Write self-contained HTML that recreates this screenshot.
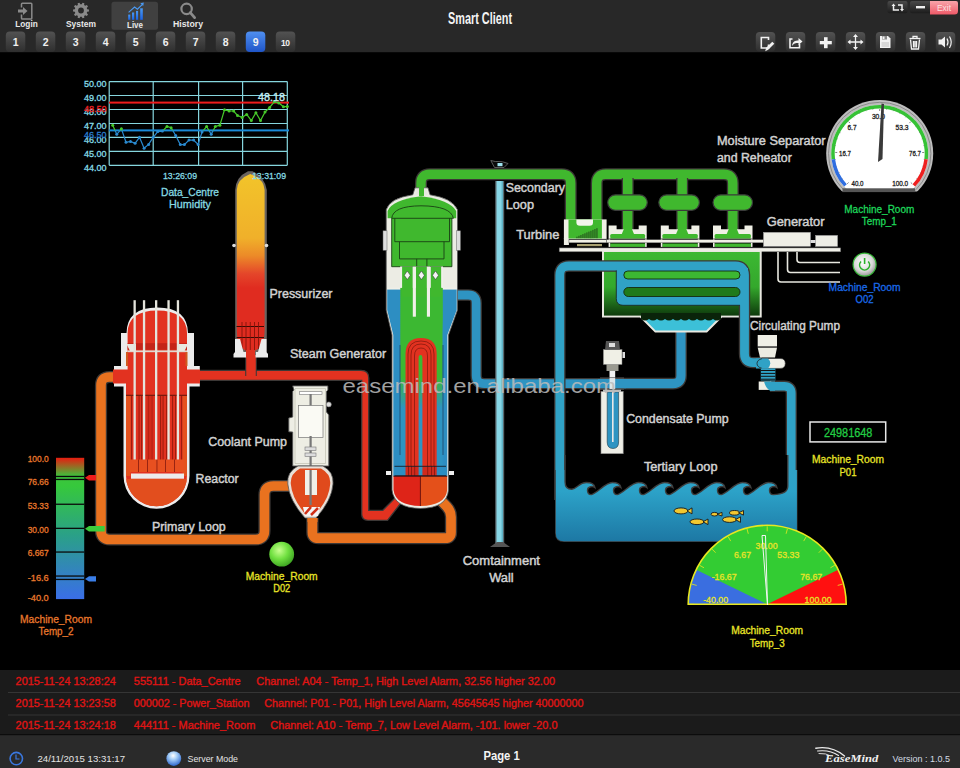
<!DOCTYPE html>
<html><head><meta charset="utf-8"><title>Smart Client</title>
<style>
html,body{margin:0;padding:0;background:#000;width:960px;height:768px;overflow:hidden}
svg{display:block;font-family:"Liberation Sans",sans-serif}
</style></head><body>
<svg width="960" height="768" viewBox="0 0 960 768">
<defs>
<linearGradient id="btn" x1="0" y1="0" x2="0" y2="1"><stop offset="0" stop-color="#525252"/><stop offset="1" stop-color="#2e2e2e"/></linearGradient>
<linearGradient id="btnb" x1="0" y1="0" x2="0" y2="1"><stop offset="0" stop-color="#4f8ff0"/><stop offset="1" stop-color="#1f55c8"/></linearGradient>
<linearGradient id="exitg" x1="0" y1="0" x2="0" y2="1"><stop offset="0" stop-color="#f8a4aa"/><stop offset="1" stop-color="#ee5a68"/></linearGradient>
<linearGradient id="wbtn" x1="0" y1="0" x2="0" y2="1"><stop offset="0" stop-color="#4a4a4a"/><stop offset="1" stop-color="#1c1c1c"/></linearGradient>
</defs>
<rect x="0" y="0" width="960" height="768" fill="#000"/>
<rect x="0" y="0" width="960" height="52.2" fill="#282828"/>
<rect x="0" y="670" width="960" height="65" fill="#1b1b1b"/>
<rect x="8" y="692" width="952" height="1" fill="#353535"/>
<rect x="8" y="714.5" width="952" height="1" fill="#353535"/>
<rect x="0" y="735" width="960" height="33" fill="#2a2a2a"/>
<rect x="0" y="734" width="960" height="1.2" fill="#0c0c0c"/>

<rect x="111.5" y="1.7" width="46.5" height="28" rx="2.5" fill="#404040"/>
<g fill="none" stroke="#8a8a8a" stroke-width="1.5"><path d="M21.5 7.5 V4 Q21.5 3.2 22.3 3.2 H31 Q31.8 3.2 31.8 4 V18.2 Q31.8 19 31 19 H22.3 Q21.5 19 21.5 18.2 V14.5"/></g>
<path d="M18 9.5 H23 V7 L27.5 11 L23 15 V12.5 H18 Z" fill="#8a8a8a"/>
<path d="M87.17 9.25 L88.94 9.54 L88.94 11.46 L87.17 11.75 L86.73 13.12 L87.99 14.39 L86.86 15.94 L85.26 15.14 L84.10 15.99 L84.37 17.76 L82.54 18.35 L81.72 16.76 L80.28 16.76 L79.46 18.35 L77.63 17.76 L77.90 15.99 L76.74 15.14 L75.14 15.94 L74.01 14.39 L75.27 13.12 L74.83 11.75 L73.06 11.46 L73.06 9.54 L74.83 9.25 L75.27 7.88 L74.01 6.61 L75.14 5.06 L76.74 5.86 L77.90 5.01 L77.63 3.24 L79.46 2.65 L80.28 4.24 L81.72 4.24 L82.54 2.65 L84.37 3.24 L84.10 5.01 L85.26 5.86 L86.86 5.06 L87.99 6.61 L86.73 7.88Z" fill="#8a8a8a"/><circle cx="81" cy="10.5" r="2.9" fill="#282828"/>
<linearGradient id="liveg" x1="0" y1="0" x2="0" y2="1"><stop offset="0" stop-color="#4a9af4"/><stop offset="1" stop-color="#1a62e4"/></linearGradient>
<g fill="url(#liveg)"><rect x="128.2" y="14.6" width="2.1" height="5.2"/><rect x="132" y="12.5" width="2.2" height="7.3"/><rect x="136" y="10.9" width="2.1" height="8.9"/><rect x="140.2" y="8.3" width="2.6" height="11.5"/></g>
<path d="M128.6 12.3 L134.6 7 L137.4 9.2 L142.2 4.6" fill="none" stroke="#4a9af4" stroke-width="1.1"/><path d="M140.3 3.2 L143.8 2.6 L143.2 6.1 Z" fill="#4a9af4"/>
<circle cx="186.6" cy="8.9" r="5.2" fill="none" stroke="#8a8a8a" stroke-width="2.2"/><path d="M190.3 12.6 L194.6 17.6" stroke="#8a8a8a" stroke-width="2.8" stroke-linecap="round"/>
<text x="26.5" y="27.3" font-size="9" fill="#e8e8e8" text-anchor="middle" font-weight="bold" textLength="22.5" lengthAdjust="spacingAndGlyphs">Login</text>
<text x="81" y="27.3" font-size="9" fill="#e8e8e8" text-anchor="middle" font-weight="bold" textLength="30" lengthAdjust="spacingAndGlyphs">System</text>
<text x="135" y="28" font-size="9" fill="#e8e8e8" text-anchor="middle" font-weight="bold" textLength="16" lengthAdjust="spacingAndGlyphs">Live</text>
<text x="188" y="27.3" font-size="9" fill="#e8e8e8" text-anchor="middle" font-weight="bold" textLength="30" lengthAdjust="spacingAndGlyphs">History</text>
<rect x="5.8" y="31.6" width="19.5" height="20.4" rx="4" fill="url(#btn)"/>
<text x="15.55" y="45.8" font-size="10.5" fill="#f0f0f0" text-anchor="middle" font-weight="bold" textLength="5">1</text>
<rect x="35.8" y="31.6" width="19.5" height="20.4" rx="4" fill="url(#btn)"/>
<text x="45.55" y="45.8" font-size="10.5" fill="#f0f0f0" text-anchor="middle" font-weight="bold" textLength="5">2</text>
<rect x="65.8" y="31.6" width="19.5" height="20.4" rx="4" fill="url(#btn)"/>
<text x="75.55" y="45.8" font-size="10.5" fill="#f0f0f0" text-anchor="middle" font-weight="bold" textLength="5">3</text>
<rect x="95.8" y="31.6" width="19.5" height="20.4" rx="4" fill="url(#btn)"/>
<text x="105.55" y="45.8" font-size="10.5" fill="#f0f0f0" text-anchor="middle" font-weight="bold" textLength="5">4</text>
<rect x="125.8" y="31.6" width="19.5" height="20.4" rx="4" fill="url(#btn)"/>
<text x="135.55" y="45.8" font-size="10.5" fill="#f0f0f0" text-anchor="middle" font-weight="bold" textLength="5">5</text>
<rect x="155.8" y="31.6" width="19.5" height="20.4" rx="4" fill="url(#btn)"/>
<text x="165.55" y="45.8" font-size="10.5" fill="#f0f0f0" text-anchor="middle" font-weight="bold" textLength="5">6</text>
<rect x="185.8" y="31.6" width="19.5" height="20.4" rx="4" fill="url(#btn)"/>
<text x="195.55" y="45.8" font-size="10.5" fill="#f0f0f0" text-anchor="middle" font-weight="bold" textLength="5">7</text>
<rect x="215.8" y="31.6" width="19.5" height="20.4" rx="4" fill="url(#btn)"/>
<text x="225.55" y="45.8" font-size="10.5" fill="#f0f0f0" text-anchor="middle" font-weight="bold" textLength="5">8</text>
<rect x="245.8" y="31.6" width="19.5" height="20.4" rx="4" fill="url(#btnb)"/>
<text x="255.55" y="45.8" font-size="10.5" fill="#f0f0f0" text-anchor="middle" font-weight="bold" textLength="5">9</text>
<rect x="275.8" y="31.6" width="19.5" height="20.4" rx="4" fill="url(#btn)"/>
<text x="285.55" y="46.3" font-size="8.5" fill="#f0f0f0" text-anchor="middle" font-weight="bold" textLength="9">10</text>
<text x="480" y="24.4" font-size="16.5" fill="#f4f4f4" text-anchor="middle" font-weight="bold" textLength="64" lengthAdjust="spacingAndGlyphs">Smart Client</text>
<rect x="887.5" y="0.9" width="20" height="12.4" rx="2" fill="url(#wbtn)"/>
<rect x="910" y="0.9" width="22" height="12.4" rx="2" fill="url(#wbtn)"/>
<path d="M930 0.9 H956 a2 2 0 0 1 2 2 V11 a3.5 3.5 0 0 1 -3.5 3.5 H930 Z" fill="url(#exitg)"/>
<text x="944" y="10.8" font-size="8.5" fill="#fbe0e0" text-anchor="middle" font-weight="normal" textLength="14" lengthAdjust="spacingAndGlyphs">Exit</text>
<rect x="916" y="6" width="9" height="2.4" fill="#f0f0f0"/>
<g fill="none" stroke="#f0f0f0" stroke-width="1.5"><path d="M893.5 5 V10 H899"/><path d="M898 5 H902 V10"/></g><path d="M891.5 6 L893.5 3.5 L895.5 6Z M900 9 L902 11.5 L904 9Z" fill="#f0f0f0"/>
<rect x="755.8" y="32" width="19.5" height="19.5" rx="4" fill="url(#btn)"/>
<rect x="785.8" y="32" width="19.5" height="19.5" rx="4" fill="url(#btn)"/>
<rect x="815.8" y="32" width="19.5" height="19.5" rx="4" fill="url(#btn)"/>
<rect x="845.8" y="32" width="19.5" height="19.5" rx="4" fill="url(#btn)"/>
<rect x="875.8" y="32" width="19.5" height="19.5" rx="4" fill="url(#btn)"/>
<rect x="905.8" y="32" width="19.5" height="19.5" rx="4" fill="url(#btn)"/>
<rect x="935.8" y="32" width="19.5" height="19.5" rx="4" fill="url(#btn)"/>
<path d="M768.5 44.5 V48 H761.3 V37.5 H768.5 V40" fill="none" stroke="#f2f2f2" stroke-width="1.6"/><path d="M765.2 51.2 L766.2 47.8 L772.3 41.7 L774.3 43.7 L768.2 49.8 Z" fill="#f2f2f2"/>
<path d="M799.5 44 V47.8 H790 V39 H792.5" fill="none" stroke="#f2f2f2" stroke-width="1.6"/><path d="M792 46 C792.5 41.5 795 40.5 798.5 40.5 V38 L802.5 41.5 L798.5 45 V43 C795.5 43 793.5 43.5 792 46Z" fill="#f2f2f2"/>
<rect x="819.8" y="41" width="12" height="3.3" fill="#f2f2f2"/><rect x="824" y="37.2" width="3.6" height="11" fill="#f2f2f2"/>
<g stroke="#f2f2f2" stroke-width="1.3"><path d="M855.5 35.5 V48.5 M849 42 H862"/></g><path d="M855.5 34 L853 37 H858Z M855.5 50 L853 47 H858Z M847.5 42 L850.5 39.5 V44.5Z M863.5 42 L860.5 39.5 V44.5Z" fill="#f2f2f2"/>
<path d="M880 36 H888 L890.5 38.5 V48 H880 Z" fill="#f2f2f2"/><rect x="882" y="36" width="5" height="3.5" fill="#8a8a8a"/><rect x="882.5" y="36.5" width="2" height="2.5" fill="#f2f2f2"/>
<rect x="881.5" y="42" width="7.5" height="5" fill="#d8d8d8"/>
<g fill="none" stroke="#f2f2f2" stroke-width="1.3"><path d="M909.5 38.5 H920.5"/><path d="M913 38 V36.5 H917 V38"/><path d="M910.5 39.5 L911.5 49 H918.5 L919.5 39.5"/><path d="M913.5 41 V47.5 M915 41 V47.5 M916.5 41 V47.5"/></g>
<path d="M938.5 39.5 H941.5 L945 36.5 V47.5 L941.5 44.5 H938.5 Z" fill="#f2f2f2"/><path d="M947 38.5 Q949 42 947 45.5 M949.5 36.5 Q953 42 949.5 48" fill="none" stroke="#f2f2f2" stroke-width="1.2"/>
<defs>
<linearGradient id="przg" x1="0" y1="0" x2="0" y2="1">
<stop offset="0" stop-color="#f2c42a"/><stop offset="0.36" stop-color="#f0b02a"/><stop offset="0.46" stop-color="#ec8a28"/><stop offset="0.56" stop-color="#e4462a"/><stop offset="0.64" stop-color="#e02c20"/><stop offset="1" stop-color="#e02c20"/></linearGradient>
<linearGradient id="condg" x1="0" y1="0" x2="0" y2="1">
<stop offset="0" stop-color="#3cb832"/><stop offset="0.55" stop-color="#34a82c"/><stop offset="1" stop-color="#0e3a0c"/></linearGradient>
<linearGradient id="basing" x1="0" y1="0" x2="0" y2="1">
<stop offset="0" stop-color="#30a2c6"/><stop offset="0.3" stop-color="#2ca2c8"/><stop offset="1" stop-color="#1d78a4"/></linearGradient>
<radialGradient id="ledg" cx="0.4" cy="0.35" r="0.7"><stop offset="0" stop-color="#c8ff90"/><stop offset="0.5" stop-color="#70e040"/><stop offset="1" stop-color="#3aa020"/></radialGradient>
</defs>
<path d="M118.00 377.00 L109.50 377.00 Q101.00 377.00 101.00 385.50 L101.00 530.50 Q101.00 539.50 110.00 539.50 L255.50 539.50 Q264.50 539.50 264.50 530.50 L264.50 495.00 Q264.50 486.00 273.50 486.00 L292.00 486.00" fill="none" stroke="#3c3836" stroke-width="12.2" stroke-linecap="butt"/>
<path d="M118.00 377.00 L109.50 377.00 Q101.00 377.00 101.00 385.50 L101.00 530.50 Q101.00 539.50 110.00 539.50 L255.50 539.50 Q264.50 539.50 264.50 530.50 L264.50 495.00 Q264.50 486.00 273.50 486.00 L292.00 486.00" fill="none" stroke="#e9721f" stroke-width="9.6" stroke-linecap="butt"/>
<path d="M312.40 518.00 L312.40 532.20 Q312.40 538.20 318.40 538.20 L445.00 538.20 Q451.00 538.20 451.00 532.20 L451.00 517.00 Q451.00 511.00 446.85 506.66 L440.00 499.50" fill="none" stroke="#3c3836" stroke-width="12.3" stroke-linecap="butt"/>
<path d="M312.40 518.00 L312.40 532.20 Q312.40 538.20 318.40 538.20 L445.00 538.20 Q451.00 538.20 451.00 532.20 L451.00 517.00 Q451.00 511.00 446.85 506.66 L440.00 499.50" fill="none" stroke="#e9721f" stroke-width="9.7" stroke-linecap="butt"/>
<path d="M196 370.3 H361 Q368.75 370.3 368.75 378 V510.3 H382.8 L396.5 496.5 L401 503 L387.5 520.3 H368 Q361.7 520.3 361.7 514 V380.3 H196 Z" fill="#e23220" stroke="#3c3836" stroke-width="1.3"/>
<path d="M251.00 355.00 L251.00 376.00" fill="none" stroke="#3c3836" stroke-width="11.6" stroke-linecap="butt"/>
<path d="M251.00 355.00 L251.00 376.00" fill="none" stroke="#e23220" stroke-width="9.0" stroke-linecap="butt"/>
<path d="M421.00 192.00 L421.00 183.15 Q421.00 174.30 429.85 174.30 L561.70 174.30 Q570.70 174.30 570.70 183.30 L570.70 222.00" fill="none" stroke="#3c3836" stroke-width="12.0" stroke-linecap="butt"/>
<path d="M421.00 192.00 L421.00 183.15 Q421.00 174.30 429.85 174.30 L561.70 174.30 Q570.70 174.30 570.70 183.30 L570.70 222.00" fill="none" stroke="#40b82e" stroke-width="9.4" stroke-linecap="butt"/>
<path d="M596.70 222.00 L596.70 183.30 Q596.70 174.30 605.70 174.30 L723.80 174.30 Q732.80 174.30 732.80 183.30 L732.80 198.00" fill="none" stroke="#3c3836" stroke-width="12.0" stroke-linecap="butt"/>
<path d="M596.70 222.00 L596.70 183.30 Q596.70 174.30 605.70 174.30 L723.80 174.30 Q732.80 174.30 732.80 183.30 L732.80 198.00" fill="none" stroke="#40b82e" stroke-width="9.4" stroke-linecap="butt"/>
<path d="M627.70 178.00 L627.70 198.00" fill="none" stroke="#3c3836" stroke-width="12.0" stroke-linecap="butt"/>
<path d="M627.70 178.00 L627.70 198.00" fill="none" stroke="#40b82e" stroke-width="9.4" stroke-linecap="butt"/>
<path d="M682.20 178.00 L682.20 198.00" fill="none" stroke="#3c3836" stroke-width="12.0" stroke-linecap="butt"/>
<path d="M682.20 178.00 L682.20 198.00" fill="none" stroke="#40b82e" stroke-width="9.4" stroke-linecap="butt"/>
<path d="M627.70 208.00 L627.70 230.00" fill="none" stroke="#3c3836" stroke-width="12.0" stroke-linecap="butt"/>
<path d="M627.70 208.00 L627.70 230.00" fill="none" stroke="#40b82e" stroke-width="9.4" stroke-linecap="butt"/>
<path d="M682.20 208.00 L682.20 230.00" fill="none" stroke="#3c3836" stroke-width="12.0" stroke-linecap="butt"/>
<path d="M682.20 208.00 L682.20 230.00" fill="none" stroke="#40b82e" stroke-width="9.4" stroke-linecap="butt"/>
<path d="M732.80 208.00 L732.80 230.00" fill="none" stroke="#3c3836" stroke-width="12.0" stroke-linecap="butt"/>
<path d="M732.80 208.00 L732.80 230.00" fill="none" stroke="#40b82e" stroke-width="9.4" stroke-linecap="butt"/>
<path d="M456.00 295.00 L468.20 295.00 Q476.20 295.00 476.20 303.00 L476.20 375.60 Q476.20 383.60 484.20 383.60 L606.00 383.60" fill="none" stroke="#3c3836" stroke-width="11.4" stroke-linecap="butt"/>
<path d="M456.00 295.00 L468.20 295.00 Q476.20 295.00 476.20 303.00 L476.20 375.60 Q476.20 383.60 484.20 383.60 L606.00 383.60" fill="none" stroke="#2e94c2" stroke-width="8.8" stroke-linecap="butt"/>
<path d="M681.00 328.00 L681.00 375.60 Q681.00 383.60 673.00 383.60 L618.00 383.60" fill="none" stroke="#3c3836" stroke-width="11.8" stroke-linecap="butt"/>
<path d="M681.00 328.00 L681.00 375.60 Q681.00 383.60 673.00 383.60 L618.00 383.60" fill="none" stroke="#2e94c2" stroke-width="9.2" stroke-linecap="butt"/>
<path d="M770.00 386.20 L784.30 386.20 Q791.30 386.20 791.30 393.20 L791.30 500.00" fill="none" stroke="#3c3836" stroke-width="11.2" stroke-linecap="butt"/>
<path d="M770.00 386.20 L784.30 386.20 Q791.30 386.20 791.30 393.20 L791.30 500.00" fill="none" stroke="#30a2c6" stroke-width="8.6" stroke-linecap="butt"/>
<rect x="246.5" y="355" width="9" height="22" fill="#e23220"/>
<path d="M121 366 V333 H126.5 Q127 307.4 157.3 307.4 Q187.5 307.4 188 333 H194 V366 H199.8 V386.5 H189.5 V475.8 A33 33 0 0 1 123.5 475.8 V386.5 H114 V366 Z" fill="#ececec"/>
<path d="M127.6 333 Q128 310.6 157.3 310.6 Q186.5 310.6 187 333 V369.5 H200 V383.5 H187 V475.8 A30.5 30.5 0 0 1 126 475.8 V383.5 H113 V369.5 H127.6 Z" fill="#e23220"/>
<rect x="127.6" y="343.2" width="59.4" height="6.5" fill="#c42418"/>
<rect x="127.6" y="350.4" width="59.4" height="1.8" fill="#e0d8d0"/>
<path d="M126.5 344 H136 V351 H130 Z M188 344 H178.5 V351 H184.5 Z" fill="#e8e8e0"/>
<rect x="121" y="352" width="6.6" height="14" fill="#ececec"/><rect x="187" y="352" width="7" height="14" fill="#ececec"/>
<rect x="126" y="352" width="2" height="14" fill="#d05a20"/><rect x="185.5" y="352" width="2" height="14" fill="#d05a20"/>
<rect x="126" y="396" width="4.5" height="80" fill="#e4521e"/><rect x="182.5" y="396" width="4.5" height="80" fill="#e4521e"/>
<rect x="131.0" y="396" width="1.1" height="64" fill="#a01c0e"/>
<rect x="138.5" y="396" width="1.1" height="64" fill="#a01c0e"/>
<rect x="141.0" y="396" width="1.1" height="64" fill="#a01c0e"/>
<rect x="148.0" y="396" width="1.1" height="64" fill="#a01c0e"/>
<rect x="151.5" y="396" width="1.1" height="64" fill="#a01c0e"/>
<rect x="160.0" y="396" width="1.1" height="64" fill="#a01c0e"/>
<rect x="162.5" y="396" width="1.1" height="64" fill="#a01c0e"/>
<rect x="166.0" y="396" width="1.1" height="64" fill="#a01c0e"/>
<rect x="172.0" y="396" width="1.1" height="64" fill="#a01c0e"/>
<rect x="175.0" y="396" width="1.1" height="64" fill="#a01c0e"/>
<rect x="181.0" y="396" width="1.1" height="64" fill="#a01c0e"/>
<rect x="146.5" y="396" width="7" height="64" fill="#c82616" opacity="0.6"/>
<rect x="126" y="394.8" width="61" height="0.9" fill="#501008"/>
<rect x="129" y="459.5" width="55" height="12.5" fill="#e85020"/>
<rect x="138.0" y="459.5" width="0.9" height="12.5" fill="#902010"/>
<rect x="147.0" y="459.5" width="0.9" height="12.5" fill="#902010"/>
<rect x="156.5" y="459.5" width="0.9" height="12.5" fill="#902010"/>
<rect x="165.0" y="459.5" width="0.9" height="12.5" fill="#902010"/>
<rect x="174.0" y="459.5" width="0.9" height="12.5" fill="#902010"/>
<rect x="131" y="473.5" width="53" height="5.2" fill="#ececec"/>
<path d="M126 479 V475.8 A30.5 30.5 0 0 0 187 475.8 V479 Z" fill="#e24e1e"/>
<rect x="133.5" y="300.2" width="2.3" height="159.3" fill="#e4e4dc"/>
<rect x="142.9" y="300.2" width="2.3" height="159.3" fill="#e4e4dc"/>
<rect x="155.0" y="300.2" width="2.3" height="159.3" fill="#e4e4dc"/>
<rect x="167.4" y="300.2" width="2.3" height="159.3" fill="#e4e4dc"/>
<rect x="176.8" y="300.2" width="2.3" height="159.3" fill="#e4e4dc"/>
<path d="M235.2 352 V190 Q235.6 177 248 171.2 H252.5 Q265 177 266.8 190 V352 Z" fill="#6a6460"/>
<path d="M236.8 345 V190 Q237.2 179 250.2 174 Q264 179 264.6 190 V330 Q264.6 350 250.5 352 Q236.8 350 236.8 330 Z" fill="url(#przg)"/>
<g stroke="#3a0a04" stroke-width="1.1"><path d="M236.5 326.5 H264 M236.5 337.5 H264"/></g>
<g stroke="#7a1008" stroke-width="0.8"><path d="M242 322 V349 M246 322 V351 M250.3 322 V352 M254.5 322 V351 M258.5 322 V349"/></g>
<path d="M235 339 H240 L243.5 352 H246 V357.5 H233.5 V354 L235 352 Z M266.5 339 H261.5 L258 352 H255.5 V357.5 H268 V354 L266.5 352 Z" fill="#ececec"/>
<rect x="246" y="350" width="9" height="8" fill="#e23220"/>
<circle cx="234" cy="245.5" r="1.8" fill="#ddd"/><circle cx="266.5" cy="245.5" r="1.8" fill="#ddd"/>
<path d="M292.7 385.9 H327.9 V390 L326.5 391.5 V412 L328.8 415 V466 H292.7 V432 L288.8 431.8 V418 L292.7 417 V391.5 L294 390 Z" fill="#eeeee4" stroke="#555" stroke-width="0.9"/>
<path d="M295 388.5 H325.5 V463.5 H295 Z" fill="none" stroke="#b8b8a8" stroke-width="0.6"/>
<rect x="299.5" y="391.7" width="22.5" height="2.9" fill="#fff" stroke="#777" stroke-width="0.6"/>
<rect x="309.5" y="394" width="2.2" height="12" fill="#777"/>
<rect x="298.5" y="405.4" width="24.5" height="32.2" fill="#fafaf4" stroke="#777" stroke-width="0.7"/>
<rect x="309.5" y="436" width="2.2" height="72" fill="#777"/>
<rect x="305" y="447" width="11" height="3.5" fill="#ddd" stroke="#777" stroke-width="0.6"/><rect x="305" y="453" width="11" height="3.5" fill="#ddd" stroke="#777" stroke-width="0.6"/>
<circle cx="328.8" cy="404.4" r="2.5" fill="#ddd" stroke="#777" stroke-width="0.6"/>
<path d="M298 466 Q286.5 472 287.8 484 Q289 500 305 518 H316 Q332 500 333 484 Q334 472 323 466 Z" fill="#e8e0d8" stroke="#555" stroke-width="0.8"/>
<path d="M300 468.5 Q290 474 290.8 484 Q292 499 306.5 515.5 H314.5 Q329.5 499 330.2 484 Q331 474 321 468.5 Z" fill="#e04a1c"/>
<rect x="305" y="470" width="12" height="25" fill="#f0f0e8"/><rect x="309.5" y="470" width="2.2" height="35" fill="#777"/>
<path d="M303 507 L320 507 L318 516 L305 516 Z" fill="#f4f4f4"/><path d="M305 514 L311 507 M311 515 L318 508" stroke="#d03018" stroke-width="2.5"/>
<rect x="307.5" y="518" width="10" height="4" fill="#e9721f"/>
<path d="M412.8 194.8 L415 187.8 H428 L430 194.8 Q452 198 457.5 209.7 V310 L448.5 335 V490 Q447 508 420.5 508.5 Q394 508 392 490 V335 L386.2 310 V209.7 Q390 198 412.8 194.8 Z" fill="#ecece4" stroke="#555" stroke-width="0.8"/>
<path d="M387.6 218.3 V211 Q392 200 421 196.3 Q450 200 456.2 211 V218.3 Z" fill="#40b82e"/>
<rect x="391.7" y="218" width="60.2" height="48.7" fill="#40b82e"/>
<g stroke="#1a4014" stroke-width="0.9" fill="none"><path d="M391.7 218.3 Q393 206 421 205.8 Q451 206 453.4 218.3"/><path d="M391.7 218.3 H453.4"/><path d="M394.8 218.3 V241.7 H449.5 V218.3"/><path d="M399.5 241.7 V258.9 H444 V241.7"/><path d="M416.7 258.9 V266.5 M426.9 258.9 V266.5"/><path d="M391.7 218.3 V266.7 H451.9 V218.3"/></g>
<path d="M415.5 194.8 L417 189 H426 L427.5 194.8 Z" fill="#e8e8e0"/><rect x="419" y="186" width="5" height="10" fill="#40b82e"/>
<path d="M387.2 289.4 H456.7 V310 L447.3 335 V476 H393.3 V335 L387.2 310 Z" fill="#2d8ec2"/>
<rect x="387.2" y="287.6" width="69.5" height="1.6" fill="#f0f0e8"/>
<linearGradient id="sgig" gradientUnits="userSpaceOnUse" x1="0" y1="287" x2="0" y2="466"><stop offset="0" stop-color="#3cb832"/><stop offset="0.5" stop-color="#3cb832"/><stop offset="0.68" stop-color="#2e94c2"/><stop offset="1" stop-color="#2e94c2"/></linearGradient>
<path d="M400.3 287.6 H442.8 V318 L442.5 333.5 V466 H400.3 V333.5 L400.3 318 Z" fill="url(#sgig)"/>
<path d="M400 345 V455 M443 345 V455" stroke="#1a3a5a" stroke-width="0.7"/>
<rect x="400" y="266.7" width="43" height="21" fill="#eeeee6"/>
<rect x="401.9" y="266.7" width="10.9" height="30" fill="#40b82e"/>
<rect x="416.0" y="266.7" width="10.9" height="30" fill="#40b82e"/>
<rect x="430.8" y="266.7" width="10.9" height="30" fill="#40b82e"/>
<rect x="400.3" y="266.7" width="1.8" height="21" fill="#f0f0e8"/>
<rect x="412.8" y="266.7" width="3.1" height="50" fill="#f0f0e8"/>
<rect x="426.9" y="266.7" width="3.1" height="50" fill="#f0f0e8"/>
<rect x="441.2" y="266.7" width="1.8" height="21" fill="#f0f0e8"/>
<path d="M407.3 271 L410.3 275.3 L407.3 279.6 L404.3 275.3 Z" fill="#f4f4f4" stroke="#333" stroke-width="0.5"/>
<path d="M421.4 271 L424.4 275.3 L421.4 279.6 L418.4 275.3 Z" fill="#f4f4f4" stroke="#333" stroke-width="0.5"/>
<path d="M435.5 271 L438.5 275.3 L435.5 279.6 L432.5 275.3 Z" fill="#f4f4f4" stroke="#333" stroke-width="0.5"/>
<rect x="383" y="230.8" width="4" height="19.5" fill="#ddd" stroke="#666" stroke-width="0.5"/><rect x="456.5" y="230.8" width="4" height="19.5" fill="#ddd" stroke="#666" stroke-width="0.5"/>
<path d="M405.5 466 V354 Q405.5 338 421 338 Q436.7 338 436.7 354 V466 Z" fill="#e23220"/>
<path d="M418.6 466 V358 Q418.6 355 420.5 355 Q422.4 355 422.4 358 V466 Z" fill="url(#sgig)"/>
<g fill="none" stroke="#6a1008" stroke-width="0.6"><path d="M408 466 V354 Q408 341 421 341 Q434 341 434 354 V466"/><path d="M411 466 V355 Q411 344 421 344 Q431 344 431 355 V466"/><path d="M414.5 466 V356 Q414.5 348 421 348 Q427.5 348 427.5 356 V466"/></g>
<rect x="394.5" y="466" width="51.5" height="10" fill="#2d8ec2"/>
<rect x="405.5" y="466" width="31.2" height="10" fill="#d02a1c"/><rect x="418.6" y="466" width="3.8" height="10" fill="#2e94c2"/>
<rect x="408.0" y="466" width="0.6" height="10" fill="#6a1008"/>
<rect x="411.0" y="466" width="0.6" height="10" fill="#6a1008"/>
<rect x="414.5" y="466" width="0.6" height="10" fill="#6a1008"/>
<rect x="427.5" y="466" width="0.6" height="10" fill="#6a1008"/>
<rect x="431.0" y="466" width="0.6" height="10" fill="#6a1008"/>
<rect x="434.0" y="466" width="0.6" height="10" fill="#6a1008"/>
<path d="M394.5 466.3 H446 M394.5 475.8 H446" stroke="#16202a" stroke-width="0.9"/>
<path d="M393.5 476 H420.5 V506 Q395.5 505.5 393.5 490 Z" fill="#de2418"/><path d="M420.5 476 H447.2 V490 Q445.5 505.5 420.5 506 Z" fill="#e4501a"/>
<rect x="419.9" y="476" width="1" height="30" fill="#701008"/>
<path d="M393.5 476.2 H447.2" stroke="#301018" stroke-width="1"/>
<rect x="386" y="471" width="5" height="4" fill="#eee"/><rect x="449" y="471" width="5" height="4" fill="#eee"/>
<rect x="495.2" y="181" width="9" height="364" fill="#5a6a70"/><rect x="496.5" y="181" width="6.4" height="364" fill="#86d6e6"/><rect x="501.6" y="181" width="1.3" height="364" fill="#5ab0c4"/>
<path d="M490.8 160.5 Q496 162 498 161.5 Q502 161 508 163.5 L504 167.5 H494.5 Z" fill="#0a0a0a" stroke="#5a5a5a" stroke-width="1"/><rect x="497.5" y="163" width="5" height="3.2" fill="#9ee4f0"/>
<path d="M490 547 L497 542 H503 L510 547 Z" fill="#555"/>
<rect x="607.7" y="194.8" width="39.6" height="15.6" rx="7.8" fill="#40b82e" stroke="#3a3a3a" stroke-width="1.2"/>
<rect x="658.8" y="194.8" width="40.6" height="15.6" rx="7.8" fill="#40b82e" stroke="#3a3a3a" stroke-width="1.2"/>
<rect x="713.0" y="194.8" width="39.5" height="15.6" rx="7.8" fill="#40b82e" stroke="#3a3a3a" stroke-width="1.2"/>
<rect x="559.2" y="247.9" width="281.5" height="3.9" fill="#f0f0e8" stroke="#555" stroke-width="0.5"/>
<rect x="563.9" y="219.4" width="42.7" height="19.5" fill="#f0f0e6"/>
<rect x="563.9" y="238" width="5" height="7" fill="#f0f0e6"/>
<path d="M568.5 219.4 H601.9 V238.6 H568.5 Z" fill="#40b82e"/>
<path d="M576.4 219.4 V222.5 Q576.4 225.8 580 225.8 H589.5 Q593 225.8 593 222.5 V219.4 Z" fill="#f4f4ec"/>
<rect x="576.5" y="236.7" width="0.9" height="1.5" fill="#1e3a18"/>
<rect x="578.5" y="235.8" width="0.9" height="2.4" fill="#1e3a18"/>
<rect x="580.5" y="235.0" width="0.9" height="3.2" fill="#1e3a18"/>
<rect x="582.5" y="234.1" width="0.9" height="4.0" fill="#1e3a18"/>
<rect x="584.5" y="233.3" width="0.9" height="4.9" fill="#1e3a18"/>
<rect x="586.5" y="232.4" width="0.9" height="5.8" fill="#1e3a18"/>
<rect x="588.5" y="231.6" width="0.9" height="6.6" fill="#1e3a18"/>
<rect x="590.5" y="230.8" width="0.9" height="7.5" fill="#1e3a18"/>
<rect x="592.5" y="229.9" width="0.9" height="8.3" fill="#1e3a18"/>
<rect x="594.5" y="229.0" width="0.9" height="9.1" fill="#1e3a18"/>
<rect x="596.5" y="228.2" width="0.9" height="10.0" fill="#1e3a18"/>
<rect x="569" y="239.7" width="37.6" height="3.1" fill="#f0f0e6" stroke="#555" stroke-width="0.4"/>
<rect x="577" y="244" width="25" height="2.2" fill="#a8a070"/>
<path d="M608.6 225.6 H616.6 V229.3 H638.7 V225.6 H646.7 V238.6 H608.6 Z" fill="#f0f0e6"/>
<rect x="610.2" y="234" width="34.9" height="4.6" rx="1.5" fill="#40b82e"/>
<path d="M624.3 228 H631.5 L634.2 234.5 H621.6 Z" fill="#40b82e"/>
<rect x="610.2" y="243.5" width="34.9" height="3.4" fill="#40b82e"/>
<rect x="608.6" y="238.6" width="1.6" height="8.3" fill="#f0f0e6"/><rect x="645.1" y="238.6" width="1.6" height="8.3" fill="#f0f0e6"/>
<path d="M660.8 225.6 H668.8 V229.3 H691.4 V225.6 H699.4 V238.6 H660.8 Z" fill="#f0f0e6"/>
<rect x="662.4" y="234" width="35.4" height="4.6" rx="1.5" fill="#40b82e"/>
<path d="M678.6 228 H685.8 L688.5 234.5 H675.9 Z" fill="#40b82e"/>
<rect x="662.4" y="243.5" width="35.4" height="3.4" fill="#40b82e"/>
<rect x="660.8" y="238.6" width="1.6" height="8.3" fill="#f0f0e6"/><rect x="697.8" y="238.6" width="1.6" height="8.3" fill="#f0f0e6"/>
<path d="M713.0 225.6 H721.0 V229.3 H744.5 V225.6 H752.5 V238.6 H713.0 Z" fill="#f0f0e6"/>
<rect x="714.6" y="234" width="36.3" height="4.6" rx="1.5" fill="#40b82e"/>
<path d="M729.2 228 H736.4 L739.1 234.5 H726.5 Z" fill="#40b82e"/>
<rect x="714.6" y="243.5" width="36.3" height="3.4" fill="#40b82e"/>
<rect x="713.0" y="238.6" width="1.6" height="8.3" fill="#f0f0e6"/><rect x="750.9" y="238.6" width="1.6" height="8.3" fill="#f0f0e6"/>
<rect x="606.6" y="239.7" width="157" height="3.1" fill="#f0f0e6" stroke="#555" stroke-width="0.4"/>
<rect x="763.5" y="232.3" width="47" height="14" fill="#eeeee6" stroke="#999" stroke-width="0.6"/>
<rect x="815.6" y="235.4" width="22" height="11" fill="#eeeee6" stroke="#999" stroke-width="0.6"/>
<rect x="810.5" y="240" width="5" height="3" fill="#ddd"/>
<g fill="none" stroke="#e8e8e0" stroke-width="1.6"><path d="M778 252 V279 Q778 282 781 282 H840"/><path d="M787.5 252 V269.5 Q787.5 272.5 790.5 272.5 H840"/><path d="M797 252 V259.5 Q797 262.5 800 262.5 H840"/></g>
<path d="M602 250.5 V317.5 H640 L655 332.5 H707 L722 317.5 H761.7 V250.5 Z" fill="#e8e8e0"/>
<rect x="604" y="252" width="155.7" height="63.6" fill="url(#condg)"/>
<path d="M641 315.6 L655.6 330.6 H706.3 L721 315.6 Z" fill="#3cc0d8"/>
<path d="M641 319 Q645 322 649 319 Q653 322 657 319 Q661 322 665 319 Q669 322 673 319 Q677 322 681 319 Q685 322 689 319 Q693 322 697 319 Q701 322 705 319 Q709 322 713 319 Q717 322 721 319 V313 H641 Z" fill="#0a240a"/>
<path d="M559.80 500.00 L559.80 275.00 Q559.80 266.00 568.80 266.00 L735.50 266.00 Q744.50 266.00 744.50 275.00 L744.50 353.85 Q744.50 362.60 753.25 362.60 L762.00 362.60" fill="none" stroke="#3c3836" stroke-width="11.4" stroke-linecap="butt"/>
<path d="M559.80 500.00 L559.80 275.00 Q559.80 266.00 568.80 266.00 L735.50 266.00 Q744.50 266.00 744.50 275.00 L744.50 353.85 Q744.50 362.60 753.25 362.60 L762.00 362.60" fill="none" stroke="#30a2c6" stroke-width="8.8" stroke-linecap="butt"/>
<path d="M616.3 268 H748 V305.3 H623 Q616.3 305.3 616.3 298.5 Z" fill="#30a2c6"/>
<path d="M616.3 270.3 V298.5 Q616.3 305.3 623 305.3 H740" fill="none" stroke="#1a2a2a" stroke-width="0.9"/>
<rect x="623.8" y="271" width="116.2" height="8" rx="4" fill="#3cb832" stroke="#142a10" stroke-width="0.9"/>
<rect x="623.8" y="287.5" width="116.2" height="9" rx="4.5" fill="#1f7a1a" stroke="#142a10" stroke-width="0.9"/>
<path d="M555 470 V533 Q555 542 564 542 H788 Q797.5 542 797.5 533 V470 Z" fill="#3a3a3a"/>
<path d="M555.8 470 V533 Q555.8 541.3 564 541.3 H788.5 Q796.9 541.3 796.9 533 V470 Z" fill="url(#basing)"/>
<path d="M565.1 455 V482 Q565.1 489.3 571.7 489.3 C577.7 488.3 579.2 482.5 586.2 482.5 C591.2 482.5 594.5 484.5 594.9 487.6 C592.8 485.6 587.5 486.5 587.5 490.3 C587.5 493.2 589.2 494.6 591.2 494.6 C597.2 493.6 605.2 482.5 612.2 482.5 C617.2 482.5 620.5 484.5 620.9 487.6 C618.8 485.6 613.5 486.5 613.5 490.3 C613.5 493.2 615.2 494.6 617.2 494.6 C623.2 493.6 631.2 482.5 638.2 482.5 C643.2 482.5 646.5 484.5 646.9 487.6 C644.8 485.6 639.5 486.5 639.5 490.3 C639.5 493.2 641.2 494.6 643.2 494.6 C649.2 493.6 657.2 482.5 664.2 482.5 C669.2 482.5 672.5 484.5 672.9 487.6 C670.8 485.6 665.5 486.5 665.5 490.3 C665.5 493.2 667.2 494.6 669.2 494.6 C675.2 493.6 683.2 482.5 690.2 482.5 C695.2 482.5 698.5 484.5 698.9 487.6 C696.8 485.6 691.5 486.5 691.5 490.3 C691.5 493.2 693.2 494.6 695.2 494.6 C701.2 493.6 709.2 482.5 716.2 482.5 C721.2 482.5 724.5 484.5 724.9 487.6 C722.8 485.6 717.5 486.5 717.5 490.3 C717.5 493.2 719.2 494.6 721.2 494.6 C727.2 493.6 735.2 482.5 742.2 482.5 C747.2 482.5 750.5 484.5 750.9 487.6 C748.8 485.6 743.5 486.5 743.5 490.3 C743.5 493.2 745.2 494.6 747.2 494.6 C753.2 493.6 761.2 482.5 768.2 482.5 C773.2 482.5 776.5 484.5 776.9 487.6 C774.8 485.6 769.5 486.5 769.5 490.3 C769.5 493.2 771.2 494.6 773.2 494.6 C783 494 787.8 492 787.8 486 V455" fill="#000" stroke="#3e3e3e" stroke-width="1.4"/>
<ellipse cx="681.0" cy="510.9" rx="7.0" ry="3.0" fill="#f2c830" stroke="#1a1a1a" stroke-width="0.9"/>
<path d="M687.0 510.9 L692.0 507.9 L692.0 513.9 Z" fill="#f2c830" stroke="#1a1a1a" stroke-width="0.9"/>
<ellipse cx="697.0" cy="521.8" rx="7.0" ry="2.8" fill="#f2c830" stroke="#1a1a1a" stroke-width="0.9"/>
<path d="M703.0 521.8 L708.0 519.0 L708.0 524.6 Z" fill="#f2c830" stroke="#1a1a1a" stroke-width="0.9"/>
<ellipse cx="714.5" cy="514.2" rx="3.5" ry="1.8" fill="#f2c830" stroke="#1a1a1a" stroke-width="0.9"/>
<path d="M717.0 514.2 L722.0 512.4 L722.0 516.0 Z" fill="#f2c830" stroke="#1a1a1a" stroke-width="0.9"/>
<ellipse cx="734.5" cy="512.8" rx="5.0" ry="2.3" fill="#f2c830" stroke="#1a1a1a" stroke-width="0.9"/>
<path d="M738.5 512.8 L743.5 510.5 L743.5 515.1 Z" fill="#f2c830" stroke="#1a1a1a" stroke-width="0.9"/>
<ellipse cx="729.5" cy="519.6" rx="7.0" ry="2.8" fill="#f2c830" stroke="#1a1a1a" stroke-width="0.9"/>
<path d="M735.5 519.6 L740.5 516.8 L740.5 522.4 Z" fill="#f2c830" stroke="#1a1a1a" stroke-width="0.9"/>
<rect x="601" y="391.5" width="22.2" height="62.2" fill="#eeeee6" stroke="#888" stroke-width="0.6"/>
<path d="M607.2 392 V442 Q607.2 448.5 613 448.5 Q618.6 448.5 618.6 442 V392 Z" fill="#2e94c2" stroke="#1a3a4a" stroke-width="0.6"/>
<rect x="612" y="392" width="1.6" height="50" fill="#e8e8e8"/>
<rect x="603" y="388" width="18" height="4" fill="#bbb"/>
<rect x="609.5" y="370" width="5.7" height="14" fill="#f2f2f2"/>
<rect x="606.5" y="364" width="12" height="7" fill="#9a9a90"/>
<rect x="603.3" y="349.5" width="18.7" height="15" fill="#f0f0e6" stroke="#777" stroke-width="0.5"/>
<path d="M605 349.5 L606 341 H619 L620 349.5 Z" fill="#555"/><rect x="609" y="343" width="6" height="4" fill="#ddd"/>
<rect x="622.5" y="352" width="2.5" height="6" fill="#ddd"/>
<path d="M600 383.6 H624" stroke="#4a4a4a" stroke-width="12.4"/><path d="M598 383.6 H626" stroke="#2e94c2" stroke-width="9.2"/>
<rect x="609.5" y="378" width="5.7" height="11" fill="#f0f0f0" opacity="0.9"/>
<rect x="757.7" y="335" width="19.3" height="11.6" fill="#efefe6"/>
<rect x="757.7" y="346.6" width="19.3" height="1.2" fill="#333"/>
<path d="M757.7 347.8 H777 L775 357.5 H760 Z" fill="#ececE2"/>
<path d="M762 358.5 H780 Q785.3 358.5 785.3 363.4 Q785.3 368.4 780 368.4 H762 Z" fill="#f0f0e8" stroke="#333" stroke-width="0.6"/>
<path d="M756 358.6 H768 Q772.5 363 768 368.4 H756 Z" fill="#30a2c6"/>
<path d="M762 358.6 Q757 360 757 363.5 Q757 367 762 368.4" fill="none" stroke="#222" stroke-width="0.8"/>
<rect x="760.8" y="368.4" width="14.6" height="12" fill="#30a2c6"/>
<rect x="760.8" y="370.0" width="14.6" height="1" fill="#111"/>
<rect x="760.8" y="372.9" width="14.6" height="1" fill="#111"/>
<rect x="760.8" y="375.8" width="14.6" height="1" fill="#111"/>
<rect x="760.8" y="378.7" width="14.6" height="1" fill="#111"/>
<rect x="758.7" y="381.5" width="12.6" height="8.4" fill="#efefe6"/>
<path d="M764 381.6 H775 V390.8 H770 Q765.5 388 764 381.6Z" fill="#30a2c6"/>
<text x="269.5" y="297.5" font-size="13" fill="#d2d2d2" font-weight="normal" textLength="63.0" lengthAdjust="spacingAndGlyphs" stroke="#d2d2d2" stroke-width="0.45">Pressurizer</text>
<text x="289.9" y="357.6" font-size="12.5" fill="#d2d2d2" font-weight="normal" textLength="96.2" lengthAdjust="spacingAndGlyphs" stroke="#d2d2d2" stroke-width="0.45">Steam Generator</text>
<text x="208.2" y="446.2" font-size="12.5" fill="#d2d2d2" font-weight="normal" textLength="78.8" lengthAdjust="spacingAndGlyphs" stroke="#d2d2d2" stroke-width="0.45">Coolant Pump</text>
<text x="195.6" y="483.2" font-size="12.5" fill="#d2d2d2" font-weight="normal" textLength="43.1" lengthAdjust="spacingAndGlyphs" stroke="#d2d2d2" stroke-width="0.45">Reactor</text>
<text x="151.9" y="531.0" font-size="12.5" fill="#d2d2d2" font-weight="normal" textLength="73.9" lengthAdjust="spacingAndGlyphs" stroke="#d2d2d2" stroke-width="0.45">Primary Loop</text>
<text x="462.7" y="565.2" font-size="12.5" fill="#d2d2d2" font-weight="normal" textLength="77.3" lengthAdjust="spacingAndGlyphs" stroke="#d2d2d2" stroke-width="0.45">Comtainment</text>
<text x="489.2" y="582.0" font-size="12.5" fill="#d2d2d2" font-weight="normal" textLength="24.5" lengthAdjust="spacingAndGlyphs" stroke="#d2d2d2" stroke-width="0.45">Wall</text>
<text x="505.7" y="191.8" font-size="12.5" fill="#d2d2d2" font-weight="normal" textLength="59.3" lengthAdjust="spacingAndGlyphs" stroke="#d2d2d2" stroke-width="0.45">Secondary</text>
<text x="505.7" y="208.5" font-size="12.5" fill="#d2d2d2" font-weight="normal" textLength="28.3" lengthAdjust="spacingAndGlyphs" stroke="#d2d2d2" stroke-width="0.45">Loop</text>
<text x="516.2" y="238.8" font-size="12.5" fill="#d2d2d2" font-weight="normal" textLength="43.2" lengthAdjust="spacingAndGlyphs" stroke="#d2d2d2" stroke-width="0.45">Turbine</text>
<text x="716.9" y="145.0" font-size="12.5" fill="#d2d2d2" font-weight="normal" textLength="108.7" lengthAdjust="spacingAndGlyphs" stroke="#d2d2d2" stroke-width="0.45">Moisture Separator</text>
<text x="716.9" y="161.8" font-size="12.5" fill="#d2d2d2" font-weight="normal" textLength="74.9" lengthAdjust="spacingAndGlyphs" stroke="#d2d2d2" stroke-width="0.45">and Reheator</text>
<text x="766.7" y="225.5" font-size="12.5" fill="#d2d2d2" font-weight="normal" textLength="57.8" lengthAdjust="spacingAndGlyphs" stroke="#d2d2d2" stroke-width="0.45">Generator</text>
<text x="750.0" y="330.0" font-size="12.5" fill="#d2d2d2" font-weight="normal" textLength="90.0" lengthAdjust="spacingAndGlyphs" stroke="#d2d2d2" stroke-width="0.45">Circulating Pump</text>
<text x="626.2" y="422.5" font-size="12.5" fill="#d2d2d2" font-weight="normal" textLength="102.4" lengthAdjust="spacingAndGlyphs" stroke="#d2d2d2" stroke-width="0.45">Condensate Pump</text>
<text x="643.9" y="470.5" font-size="12.5" fill="#d2d2d2" font-weight="normal" textLength="73.6" lengthAdjust="spacingAndGlyphs" stroke="#d2d2d2" stroke-width="0.45">Tertiary Loop</text>
<text x="342.5" y="392.8" font-size="21" fill="#bcbcbc" font-weight="normal" textLength="273.5" lengthAdjust="spacingAndGlyphs" opacity="0.85">easemind.en.alibaba.com</text>
<path d="M109.2 81.6 H287.3 M109.2 95.5 H287.3 M109.2 109.5 H287.3 M109.2 123.5 H287.3 M109.2 137.4 H287.3 M109.2 151.4 H287.3 M109.2 165.3 H287.3 M109.2 81.6 V165.3 M153.2 81.6 V165.3 M198.6 81.6 V165.3 M242.6 81.6 V165.3 M287.3 81.6 V165.3" stroke="#86d6de" stroke-width="1.2" fill="none"/>
<text x="106.6" y="87.3" font-size="9" fill="#86dce6" font-weight="normal" text-anchor="end" stroke="#86dce6" stroke-width="0.3" textLength="22.6" lengthAdjust="spacingAndGlyphs">50.00</text>
<text x="106.6" y="101.2" font-size="9" fill="#86dce6" font-weight="normal" text-anchor="end" stroke="#86dce6" stroke-width="0.3" textLength="22.6" lengthAdjust="spacingAndGlyphs">49.00</text>
<text x="106.6" y="115.2" font-size="9" fill="#86dce6" font-weight="normal" text-anchor="end" stroke="#86dce6" stroke-width="0.3" textLength="22.6" lengthAdjust="spacingAndGlyphs">48.00</text>
<text x="106.6" y="129.2" font-size="9" fill="#86dce6" font-weight="normal" text-anchor="end" stroke="#86dce6" stroke-width="0.3" textLength="22.6" lengthAdjust="spacingAndGlyphs">47.00</text>
<text x="106.6" y="143.1" font-size="9" fill="#86dce6" font-weight="normal" text-anchor="end" stroke="#86dce6" stroke-width="0.3" textLength="22.6" lengthAdjust="spacingAndGlyphs">46.00</text>
<text x="106.6" y="157.1" font-size="9" fill="#86dce6" font-weight="normal" text-anchor="end" stroke="#86dce6" stroke-width="0.3" textLength="22.6" lengthAdjust="spacingAndGlyphs">45.00</text>
<text x="106.6" y="171.0" font-size="9" fill="#86dce6" font-weight="normal" text-anchor="end" stroke="#86dce6" stroke-width="0.3" textLength="22.6" lengthAdjust="spacingAndGlyphs">44.00</text>
<rect x="109" y="101.6" width="180" height="2" fill="#ee1c1c"/>
<rect x="109" y="129.4" width="180" height="2" fill="#1a8ad8"/>
<text x="106.6" y="111.5" font-size="9" fill="#ee2020" font-weight="normal" text-anchor="end" stroke="#ee2020" stroke-width="0.3" textLength="22.6" lengthAdjust="spacingAndGlyphs">48.50</text>
<text x="106.6" y="138.4" font-size="9" fill="#2a7ed0" font-weight="normal" text-anchor="end" stroke="#2a7ed0" stroke-width="0.3" textLength="22.6" lengthAdjust="spacingAndGlyphs">46.50</text>
<clipPath id="abv"><rect x="100" y="70" width="200" height="60.4"/></clipPath><clipPath id="blw"><rect x="100" y="130.4" width="200" height="40"/></clipPath>
<path d="M112.7 125.2 L116.8 134.3 L121.4 128.8 L126.0 142.3 L130.5 141.4 L135.1 143.3 L139.5 137.3 L144.1 148.3 L148.6 144.4 L153.2 137.3 L157.8 131.6 L162.4 131.1 L167.0 126.5 L171.1 127.7 L175.7 135.5 L180.3 144.6 L184.4 144.6 L189.0 140.1 L193.6 140.1 L198.1 144.4 L202.0 132.0 L206.6 126.5 L211.2 134.3 L215.3 126.5 L219.9 125.2 L224.5 109.8 L229.1 111.0 L233.7 111.0 L237.5 115.5 L242.1 117.4 L246.7 114.4 L251.3 120.6 L255.9 112.8 L260.5 120.6 L265.0 112.1 L269.6 107.5 L274.2 101.8 L278.8 102.9 L283.4 106.8 L287.3 106.4" fill="none" stroke="#46c82a" stroke-width="1.2" clip-path="url(#abv)"/>
<path d="M112.7 125.2 L116.8 134.3 L121.4 128.8 L126.0 142.3 L130.5 141.4 L135.1 143.3 L139.5 137.3 L144.1 148.3 L148.6 144.4 L153.2 137.3 L157.8 131.6 L162.4 131.1 L167.0 126.5 L171.1 127.7 L175.7 135.5 L180.3 144.6 L184.4 144.6 L189.0 140.1 L193.6 140.1 L198.1 144.4 L202.0 132.0 L206.6 126.5 L211.2 134.3 L215.3 126.5 L219.9 125.2 L224.5 109.8 L229.1 111.0 L233.7 111.0 L237.5 115.5 L242.1 117.4 L246.7 114.4 L251.3 120.6 L255.9 112.8 L260.5 120.6 L265.0 112.1 L269.6 107.5 L274.2 101.8 L278.8 102.9 L283.4 106.8 L287.3 106.4" fill="none" stroke="#2a8ad0" stroke-width="1.2" clip-path="url(#blw)"/>
<circle cx="112.7" cy="125.2" r="1.5" fill="#46c82a"/>
<circle cx="116.8" cy="134.3" r="1.5" fill="#2a8ad0"/>
<circle cx="121.4" cy="128.8" r="1.5" fill="#46c82a"/>
<circle cx="126.0" cy="142.3" r="1.5" fill="#2a8ad0"/>
<circle cx="130.5" cy="141.4" r="1.5" fill="#2a8ad0"/>
<circle cx="135.1" cy="143.3" r="1.5" fill="#2a8ad0"/>
<circle cx="139.5" cy="137.3" r="1.5" fill="#2a8ad0"/>
<circle cx="144.1" cy="148.3" r="1.5" fill="#2a8ad0"/>
<circle cx="148.6" cy="144.4" r="1.5" fill="#2a8ad0"/>
<circle cx="153.2" cy="137.3" r="1.5" fill="#2a8ad0"/>
<circle cx="157.8" cy="131.6" r="1.5" fill="#2a8ad0"/>
<circle cx="162.4" cy="131.1" r="1.5" fill="#2a8ad0"/>
<circle cx="167.0" cy="126.5" r="1.5" fill="#46c82a"/>
<circle cx="171.1" cy="127.7" r="1.5" fill="#46c82a"/>
<circle cx="175.7" cy="135.5" r="1.5" fill="#2a8ad0"/>
<circle cx="180.3" cy="144.6" r="1.5" fill="#2a8ad0"/>
<circle cx="184.4" cy="144.6" r="1.5" fill="#2a8ad0"/>
<circle cx="189.0" cy="140.1" r="1.5" fill="#2a8ad0"/>
<circle cx="193.6" cy="140.1" r="1.5" fill="#2a8ad0"/>
<circle cx="198.1" cy="144.4" r="1.5" fill="#2a8ad0"/>
<circle cx="202.0" cy="132.0" r="1.5" fill="#2a8ad0"/>
<circle cx="206.6" cy="126.5" r="1.5" fill="#46c82a"/>
<circle cx="211.2" cy="134.3" r="1.5" fill="#2a8ad0"/>
<circle cx="215.3" cy="126.5" r="1.5" fill="#46c82a"/>
<circle cx="219.9" cy="125.2" r="1.5" fill="#46c82a"/>
<circle cx="224.5" cy="109.8" r="1.5" fill="#46c82a"/>
<circle cx="229.1" cy="111.0" r="1.5" fill="#46c82a"/>
<circle cx="233.7" cy="111.0" r="1.5" fill="#46c82a"/>
<circle cx="237.5" cy="115.5" r="1.5" fill="#46c82a"/>
<circle cx="242.1" cy="117.4" r="1.5" fill="#46c82a"/>
<circle cx="246.7" cy="114.4" r="1.5" fill="#46c82a"/>
<circle cx="251.3" cy="120.6" r="1.5" fill="#46c82a"/>
<circle cx="255.9" cy="112.8" r="1.5" fill="#46c82a"/>
<circle cx="260.5" cy="120.6" r="1.5" fill="#46c82a"/>
<circle cx="265.0" cy="112.1" r="1.5" fill="#46c82a"/>
<circle cx="269.6" cy="107.5" r="1.5" fill="#46c82a"/>
<circle cx="274.2" cy="101.8" r="1.5" fill="#46c82a"/>
<circle cx="278.8" cy="102.9" r="1.5" fill="#46c82a"/>
<circle cx="283.4" cy="106.8" r="1.5" fill="#46c82a"/>
<circle cx="287.3" cy="106.4" r="1.5" fill="#46c82a"/>
<text x="271.5" y="100.5" font-size="10.5" fill="#c8f0f6" font-weight="normal" text-anchor="middle" stroke="#c8f0f6" stroke-width="0.3" textLength="27.0" lengthAdjust="spacingAndGlyphs">48.18</text>
<text x="180.0" y="179.3" font-size="9.5" fill="#86dae2" font-weight="normal" text-anchor="middle" stroke="#86dae2" stroke-width="0.3" textLength="34.0" lengthAdjust="spacingAndGlyphs">13:26:09</text>
<text x="269.0" y="179.3" font-size="9.5" fill="#86dae2" font-weight="normal" text-anchor="middle" stroke="#86dae2" stroke-width="0.3" textLength="34.0" lengthAdjust="spacingAndGlyphs">13:31:09</text>
<text x="190.0" y="195.8" font-size="10.5" fill="#86dae2" font-weight="normal" text-anchor="middle" stroke="#86dae2" stroke-width="0.3" textLength="58.0" lengthAdjust="spacingAndGlyphs">Data_Centre</text>
<text x="190.0" y="208.3" font-size="10.5" fill="#86dae2" font-weight="normal" text-anchor="middle" stroke="#86dae2" stroke-width="0.3" textLength="42.0" lengthAdjust="spacingAndGlyphs">Humidity</text>
<clipPath id="g1c"><rect x="820" y="90" width="120" height="101.5"/></clipPath>
<g clip-path="url(#g1c)"><circle cx="879.7" cy="153.5" r="53.5" fill="#bdbdbd"/><circle cx="879.7" cy="153.5" r="51.2" fill="none" stroke="#8a8a8a" stroke-width="1"/><circle cx="879.7" cy="153.5" r="48.5" fill="#ffffff"/></g>
<path d="M831.56 159.41 A48.5 48.5 0 1 1 927.84 159.41 L924.36 158.98 A45.0 45.0 0 1 0 835.04 158.98 Z" fill="#36c236"/>
<path d="M844.23 186.58 A48.5 48.5 0 0 1 831.56 159.41 L835.04 158.98 A45.0 45.0 0 0 0 846.79 184.19 Z" fill="#2f6ee0"/>
<path d="M927.84 159.41 A48.5 48.5 0 0 1 915.17 186.58 L912.61 184.19 A45.0 45.0 0 0 0 924.36 158.98 Z" fill="#ee2020"/>
<rect x="842.5" y="188.3" width="72.5" height="3.8" fill="#555"/>
<path d="M847.15 183.85 L848.62 182.48 M842.87 178.47 L842.45 178.75 M839.46 172.49 L839.01 172.71 M837.01 166.06 L836.53 166.21 M835.58 159.33 L835.09 159.40 M835.21 152.46 L837.21 152.51 M835.90 145.62 L835.41 145.53 M837.64 138.96 L837.17 138.80 M840.38 132.65 L839.94 132.42 M844.07 126.84 L843.67 126.54 M848.60 121.67 L850.00 123.10 M853.88 117.26 L853.59 116.85 M859.77 113.71 L859.55 113.26 M866.15 111.11 L865.99 110.64 M872.84 109.53 L872.76 109.04 M879.70 109.00 L879.70 111.00 M886.56 109.53 L886.64 109.04 M893.25 111.11 L893.41 110.64 M899.63 113.71 L899.85 113.26 M905.52 117.26 L905.81 116.85 M910.80 121.67 L909.40 123.10 M915.33 126.84 L915.73 126.54 M919.02 132.65 L919.46 132.42 M921.76 138.96 L922.23 138.80 M923.50 145.62 L923.99 145.53 M924.19 152.46 L922.19 152.51 M923.82 159.33 L924.31 159.40 M922.39 166.06 L922.87 166.21 M919.94 172.49 L920.39 172.71 M916.53 178.47 L916.95 178.75 M912.25 183.85 L910.78 182.48" stroke="#333" stroke-width="0.6"/>
<text x="878.4" y="118.8" font-size="7" fill="#222" font-weight="normal" text-anchor="middle" stroke="#222" stroke-width="0.3" textLength="13.0" lengthAdjust="spacingAndGlyphs">30.0</text>
<text x="852.0" y="129.8" font-size="7" fill="#222" font-weight="normal" text-anchor="middle" stroke="#222" stroke-width="0.3" textLength="9.0" lengthAdjust="spacingAndGlyphs">6.7</text>
<text x="902.0" y="129.8" font-size="7" fill="#222" font-weight="normal" text-anchor="middle" stroke="#222" stroke-width="0.3" textLength="13.0" lengthAdjust="spacingAndGlyphs">53.3</text>
<text x="845.0" y="156.2" font-size="7" fill="#222" font-weight="normal" text-anchor="middle" stroke="#222" stroke-width="0.3" textLength="12.0" lengthAdjust="spacingAndGlyphs">16.7</text>
<text x="915.0" y="156.2" font-size="7" fill="#222" font-weight="normal" text-anchor="middle" stroke="#222" stroke-width="0.3" textLength="12.0" lengthAdjust="spacingAndGlyphs">76.7</text>
<text x="857.5" y="186.4" font-size="7" fill="#222" font-weight="normal" text-anchor="middle" stroke="#222" stroke-width="0.3" textLength="12.0" lengthAdjust="spacingAndGlyphs">40.0</text>
<text x="900.2" y="186.4" font-size="7" fill="#222" font-weight="normal" text-anchor="middle" stroke="#222" stroke-width="0.3" textLength="16.0" lengthAdjust="spacingAndGlyphs">100.0</text>
<path d="M878 162 L881.5 103.5 L884 104 L882.5 159 Z" fill="#3a3a3a"/>
<text x="879.3" y="212.7" font-size="10.5" fill="#1ed65a" font-weight="normal" text-anchor="middle" stroke="#1ed65a" stroke-width="0.3" textLength="70.0" lengthAdjust="spacingAndGlyphs">Machine_Room</text>
<text x="879.3" y="225.0" font-size="10.5" fill="#1ed65a" font-weight="normal" text-anchor="middle" stroke="#1ed65a" stroke-width="0.3" textLength="35.0" lengthAdjust="spacingAndGlyphs">Temp_1</text>
<path d="M688.2 604.3 A79 79 0 0 1 846.2 604.3 Z" fill="#33cc33"/>
<path d="M767.2 604.3 L688.20 604.30 A79 79 0 0 1 696.20 569.67 Z" fill="#3a6ee0"/>
<path d="M767.2 604.3 L838.20 569.67 A79 79 0 0 1 846.20 604.30 Z" fill="#ff1010"/>
<path d="M688.2 604.3 A79 79 0 0 1 846.2 604.3 Z" fill="none" stroke="#e8e820" stroke-width="1.6"/>
<path d="M689.20 604.30 L694.20 604.30 M691.86 584.11 L696.69 585.41 M699.65 565.30 L703.98 567.80 M712.05 549.15 L715.58 552.68 M728.20 536.75 L730.70 541.08 M747.01 528.96 L748.31 533.79 M767.20 526.30 L767.20 531.30 M787.39 528.96 L786.09 533.79 M806.20 536.75 L803.70 541.08 M822.35 549.15 L818.82 552.68 M834.75 565.30 L830.42 567.80 M842.54 584.11 L837.71 585.41 M845.20 604.30 L840.20 604.30" stroke="#e8e820" stroke-width="0.8"/>
<text x="766.6" y="548.8" font-size="9" fill="#e8e428" font-weight="normal" text-anchor="middle" stroke="#e8e428" stroke-width="0.3" textLength="22.0" lengthAdjust="spacingAndGlyphs">30.00</text>
<text x="742.5" y="557.8" font-size="9" fill="#e8e428" font-weight="normal" text-anchor="middle" stroke="#e8e428" stroke-width="0.3" textLength="17.0" lengthAdjust="spacingAndGlyphs">6.67</text>
<text x="788.3" y="557.8" font-size="9" fill="#e8e428" font-weight="normal" text-anchor="middle" stroke="#e8e428" stroke-width="0.3" textLength="22.0" lengthAdjust="spacingAndGlyphs">53.33</text>
<text x="724.2" y="579.8" font-size="9" fill="#e8e428" font-weight="normal" text-anchor="middle" stroke="#e8e428" stroke-width="0.3" textLength="25.0" lengthAdjust="spacingAndGlyphs">-16.67</text>
<text x="811.2" y="579.8" font-size="9" fill="#e8e428" font-weight="normal" text-anchor="middle" stroke="#e8e428" stroke-width="0.3" textLength="22.0" lengthAdjust="spacingAndGlyphs">76.67</text>
<text x="715.7" y="602.5" font-size="9" fill="#e8e428" font-weight="normal" text-anchor="middle" stroke="#e8e428" stroke-width="0.3" textLength="25.0" lengthAdjust="spacingAndGlyphs">-40.00</text>
<text x="818.1" y="602.5" font-size="9" fill="#e8e428" font-weight="normal" text-anchor="middle" stroke="#e8e428" stroke-width="0.3" textLength="27.0" lengthAdjust="spacingAndGlyphs">100.00</text>
<path d="M767.5 605 L762 535.5 L765.5 535.5 Z" fill="none" stroke="#f4f4f4" stroke-width="1"/>
<text x="767.2" y="634.3" font-size="10.5" fill="#e8e428" font-weight="normal" text-anchor="middle" stroke="#e8e428" stroke-width="0.3" textLength="72.0" lengthAdjust="spacingAndGlyphs">Machine_Room</text>
<text x="767.2" y="647.0" font-size="10.5" fill="#e8e428" font-weight="normal" text-anchor="middle" stroke="#e8e428" stroke-width="0.3" textLength="35.0" lengthAdjust="spacingAndGlyphs">Temp_3</text>
<linearGradient id="tbar" x1="0" y1="0" x2="0" y2="1"><stop offset="0" stop-color="#e81c10"/><stop offset="0.13" stop-color="#3cc43c"/><stop offset="0.2" stop-color="#36c83c"/><stop offset="0.55" stop-color="#2aa088"/><stop offset="1" stop-color="#3a6ee8"/></linearGradient>
<rect x="56" y="457.8" width="28.2" height="141.3" fill="url(#tbar)"/>
<rect x="56" y="457.8" width="28.2" height="20" fill="#d82a12" opacity="0.0"/>
<rect x="56" y="475.8" width="28.2" height="1.3" fill="#0a0a0a"/>
<rect x="56" y="478.8" width="28.2" height="1.3" fill="#0a0a0a"/>
<rect x="56" y="503.6" width="28.2" height="1.3" fill="#0a0a0a"/>
<rect x="56" y="527.7" width="28.2" height="1.3" fill="#0a0a0a"/>
<rect x="56" y="551.4" width="28.2" height="1.3" fill="#0a0a0a"/>
<rect x="56" y="575.4" width="28.2" height="1.3" fill="#0a0a0a"/>
<rect x="56" y="578.8" width="28.2" height="1.3" fill="#0a0a0a"/>
<text x="48.7" y="461.9" font-size="9" fill="#e8782c" font-weight="normal" text-anchor="end" stroke="#e8782c" stroke-width="0.3" textLength="21.0" lengthAdjust="spacingAndGlyphs">100.0</text>
<text x="48.7" y="485.1" font-size="9" fill="#e8782c" font-weight="normal" text-anchor="end" stroke="#e8782c" stroke-width="0.3" textLength="21.0" lengthAdjust="spacingAndGlyphs">76.66</text>
<text x="48.7" y="508.9" font-size="9" fill="#e8782c" font-weight="normal" text-anchor="end" stroke="#e8782c" stroke-width="0.3" textLength="21.0" lengthAdjust="spacingAndGlyphs">53.33</text>
<text x="48.7" y="532.7" font-size="9" fill="#e8782c" font-weight="normal" text-anchor="end" stroke="#e8782c" stroke-width="0.3" textLength="21.0" lengthAdjust="spacingAndGlyphs">30.00</text>
<text x="48.7" y="555.9" font-size="9" fill="#e8782c" font-weight="normal" text-anchor="end" stroke="#e8782c" stroke-width="0.3" textLength="21.0" lengthAdjust="spacingAndGlyphs">6.667</text>
<text x="48.7" y="580.5" font-size="9" fill="#e8782c" font-weight="normal" text-anchor="end" stroke="#e8782c" stroke-width="0.3" textLength="21.0" lengthAdjust="spacingAndGlyphs">-16.6</text>
<text x="48.7" y="600.5" font-size="9" fill="#e8782c" font-weight="normal" text-anchor="end" stroke="#e8782c" stroke-width="0.3" textLength="21.0" lengthAdjust="spacingAndGlyphs">-40.0</text>
<path d="M85 477.7 L89 475 H96 V480.4 H89 Z" fill="#ee1c1c"/>
<path d="M85 528.8 L89 526 H104.7 V531.6 H89 Z" fill="#3ccc3c"/>
<path d="M85 578.9 L89 576.2 H96 V581.6 H89 Z" fill="#3a7ee8"/>
<text x="56.0" y="623.0" font-size="10.5" fill="#e8782c" font-weight="normal" text-anchor="middle" stroke="#e8782c" stroke-width="0.3" textLength="72.0" lengthAdjust="spacingAndGlyphs">Machine_Room</text>
<text x="56.0" y="635.4" font-size="10.5" fill="#e8782c" font-weight="normal" text-anchor="middle" stroke="#e8782c" stroke-width="0.3" textLength="35.0" lengthAdjust="spacingAndGlyphs">Temp_2</text>
<circle cx="281.7" cy="554.2" r="12.4" fill="url(#ledg)"/>
<text x="281.7" y="579.6" font-size="10.5" fill="#e8e428" font-weight="normal" text-anchor="middle" stroke="#e8e428" stroke-width="0.3" textLength="72.0" lengthAdjust="spacingAndGlyphs">Machine_Room</text>
<text x="281.7" y="592.0" font-size="10.5" fill="#e8e428" font-weight="normal" text-anchor="middle" stroke="#e8e428" stroke-width="0.3" textLength="17.0" lengthAdjust="spacingAndGlyphs">D02</text>
<radialGradient id="pwg" cx="0.45" cy="0.4" r="0.65"><stop offset="0" stop-color="#ffffff"/><stop offset="0.6" stop-color="#d8d8d8"/><stop offset="1" stop-color="#8a8a8a"/></radialGradient>
<circle cx="864.6" cy="264.6" r="11.5" fill="url(#pwg)" stroke="#3ab83a" stroke-width="1.2"/>
<path d="M861 261.5 A5 5 0 1 0 868.2 261.5" fill="none" stroke="#2ab02a" stroke-width="1.6"/><rect x="863.8" y="258" width="1.6" height="6" fill="#2ab02a"/>
<text x="864.6" y="290.5" font-size="10.5" fill="#1a6ae8" font-weight="normal" text-anchor="middle" stroke="#1a6ae8" stroke-width="0.3" textLength="72.0" lengthAdjust="spacingAndGlyphs">Machine_Room</text>
<text x="864.6" y="303.0" font-size="10.5" fill="#1a6ae8" font-weight="normal" text-anchor="middle" stroke="#1a6ae8" stroke-width="0.3" textLength="18.0" lengthAdjust="spacingAndGlyphs">O02</text>
<rect x="810" y="422" width="75.7" height="19.9" fill="none" stroke="#e8e8e8" stroke-width="1.5"/>
<text x="848.2" y="436.9" font-size="12.5" fill="#22cc44" font-weight="normal" text-anchor="middle" stroke="#22cc44" stroke-width="0.3" textLength="48.5" lengthAdjust="spacingAndGlyphs">24981648</text>
<text x="848.0" y="462.7" font-size="10.5" fill="#e8e428" font-weight="normal" text-anchor="middle" stroke="#e8e428" stroke-width="0.3" textLength="72.0" lengthAdjust="spacingAndGlyphs">Machine_Room</text>
<text x="848.0" y="475.9" font-size="10.5" fill="#e8e428" font-weight="normal" text-anchor="middle" stroke="#e8e428" stroke-width="0.3" textLength="17.0" lengthAdjust="spacingAndGlyphs">P01</text>
<text x="15.6" y="684.5" font-size="11.5" fill="#e01414" font-weight="normal" font-style="normal" textLength="100.2" lengthAdjust="spacingAndGlyphs" stroke="#e01414" stroke-width="0.35">2015-11-24 13:28:24</text>
<text x="133.8" y="684.5" font-size="11.5" fill="#e01414" font-weight="normal" font-style="normal" textLength="106.8" lengthAdjust="spacingAndGlyphs" stroke="#e01414" stroke-width="0.35">555111 - Data_Centre</text>
<text x="256.3" y="684.5" font-size="11.5" fill="#e01414" font-weight="normal" font-style="normal" textLength="298.7" lengthAdjust="spacingAndGlyphs" stroke="#e01414" stroke-width="0.35">Channel: A04 - Temp_1, High Level Alarm, 32.56 higher 32.00</text>
<text x="15.6" y="706.9" font-size="11.5" fill="#e01414" font-weight="normal" font-style="normal" textLength="100.2" lengthAdjust="spacingAndGlyphs" stroke="#e01414" stroke-width="0.35">2015-11-24 13:23:58</text>
<text x="133.8" y="706.9" font-size="11.5" fill="#e01414" font-weight="normal" font-style="normal" textLength="115.6" lengthAdjust="spacingAndGlyphs" stroke="#e01414" stroke-width="0.35">000002 - Power_Station</text>
<text x="264.2" y="706.9" font-size="11.5" fill="#e01414" font-weight="normal" font-style="normal" textLength="319.3" lengthAdjust="spacingAndGlyphs" stroke="#e01414" stroke-width="0.35">Channel: P01 - P01, High Level Alarm, 45645645 higher 40000000</text>
<text x="15.6" y="729.2" font-size="11.5" fill="#e01414" font-weight="normal" font-style="normal" textLength="100.2" lengthAdjust="spacingAndGlyphs" stroke="#e01414" stroke-width="0.35">2015-11-24 13:24:18</text>
<text x="133.8" y="729.2" font-size="11.5" fill="#e01414" font-weight="normal" font-style="normal" textLength="121.5" lengthAdjust="spacingAndGlyphs" stroke="#e01414" stroke-width="0.35">444111 - Machine_Room</text>
<text x="270.3" y="729.2" font-size="11.5" fill="#e01414" font-weight="normal" font-style="normal" textLength="287.2" lengthAdjust="spacingAndGlyphs" stroke="#e01414" stroke-width="0.35">Channel: A10 - Temp_7, Low Level Alarm, -101. lower -20.0</text>
<circle cx="16.3" cy="758.6" r="6.2" fill="none" stroke="#3a78e0" stroke-width="1.6"/><path d="M16 754.5 V759 H19.5" fill="none" stroke="#3a78e0" stroke-width="1.2"/>
<text x="37.5" y="761.8" font-size="9.5" fill="#e4e4e4" font-weight="normal" font-style="normal" textLength="87.5" lengthAdjust="spacingAndGlyphs">24/11/2015 13:31:17</text>
<radialGradient id="sph" cx="0.45" cy="0.3" r="0.75"><stop offset="0" stop-color="#ffffff"/><stop offset="0.35" stop-color="#a8d0f8"/><stop offset="1" stop-color="#1e5ac8"/></radialGradient>
<circle cx="173.8" cy="758.6" r="7.4" fill="url(#sph)"/>
<text x="187.5" y="761.8" font-size="9.5" fill="#e4e4e4" font-weight="normal" font-style="normal" textLength="50.5" lengthAdjust="spacingAndGlyphs">Server Mode</text>
<text x="483.4" y="760.3" font-size="13" fill="#f4f4f4" font-weight="bold" font-style="normal" textLength="36.4" lengthAdjust="spacingAndGlyphs">Page 1</text>
<g fill="none" stroke="#ececec" stroke-linecap="round"><path d="M815.8 748.2 Q832 745.5 844.5 756" stroke-width="1.4"/><path d="M817.5 751 Q830 749.5 838.5 755.5" stroke-width="1.1"/><path d="M819 753.5 Q826 753 831 756" stroke-width="0.9"/></g>
<text x="825.0" y="762.3" font-size="9.5" fill="#f0f0f0" font-weight="bold" font-style="italic" textLength="53.3" lengthAdjust="spacingAndGlyphs" font-family="Liberation Serif">EaseMind</text>
<text x="892.5" y="762.3" font-size="9.5" fill="#d4dce4" font-weight="normal" font-style="normal" textLength="57.5" lengthAdjust="spacingAndGlyphs">Version : 1.0.5</text>
</svg>
</body></html>
